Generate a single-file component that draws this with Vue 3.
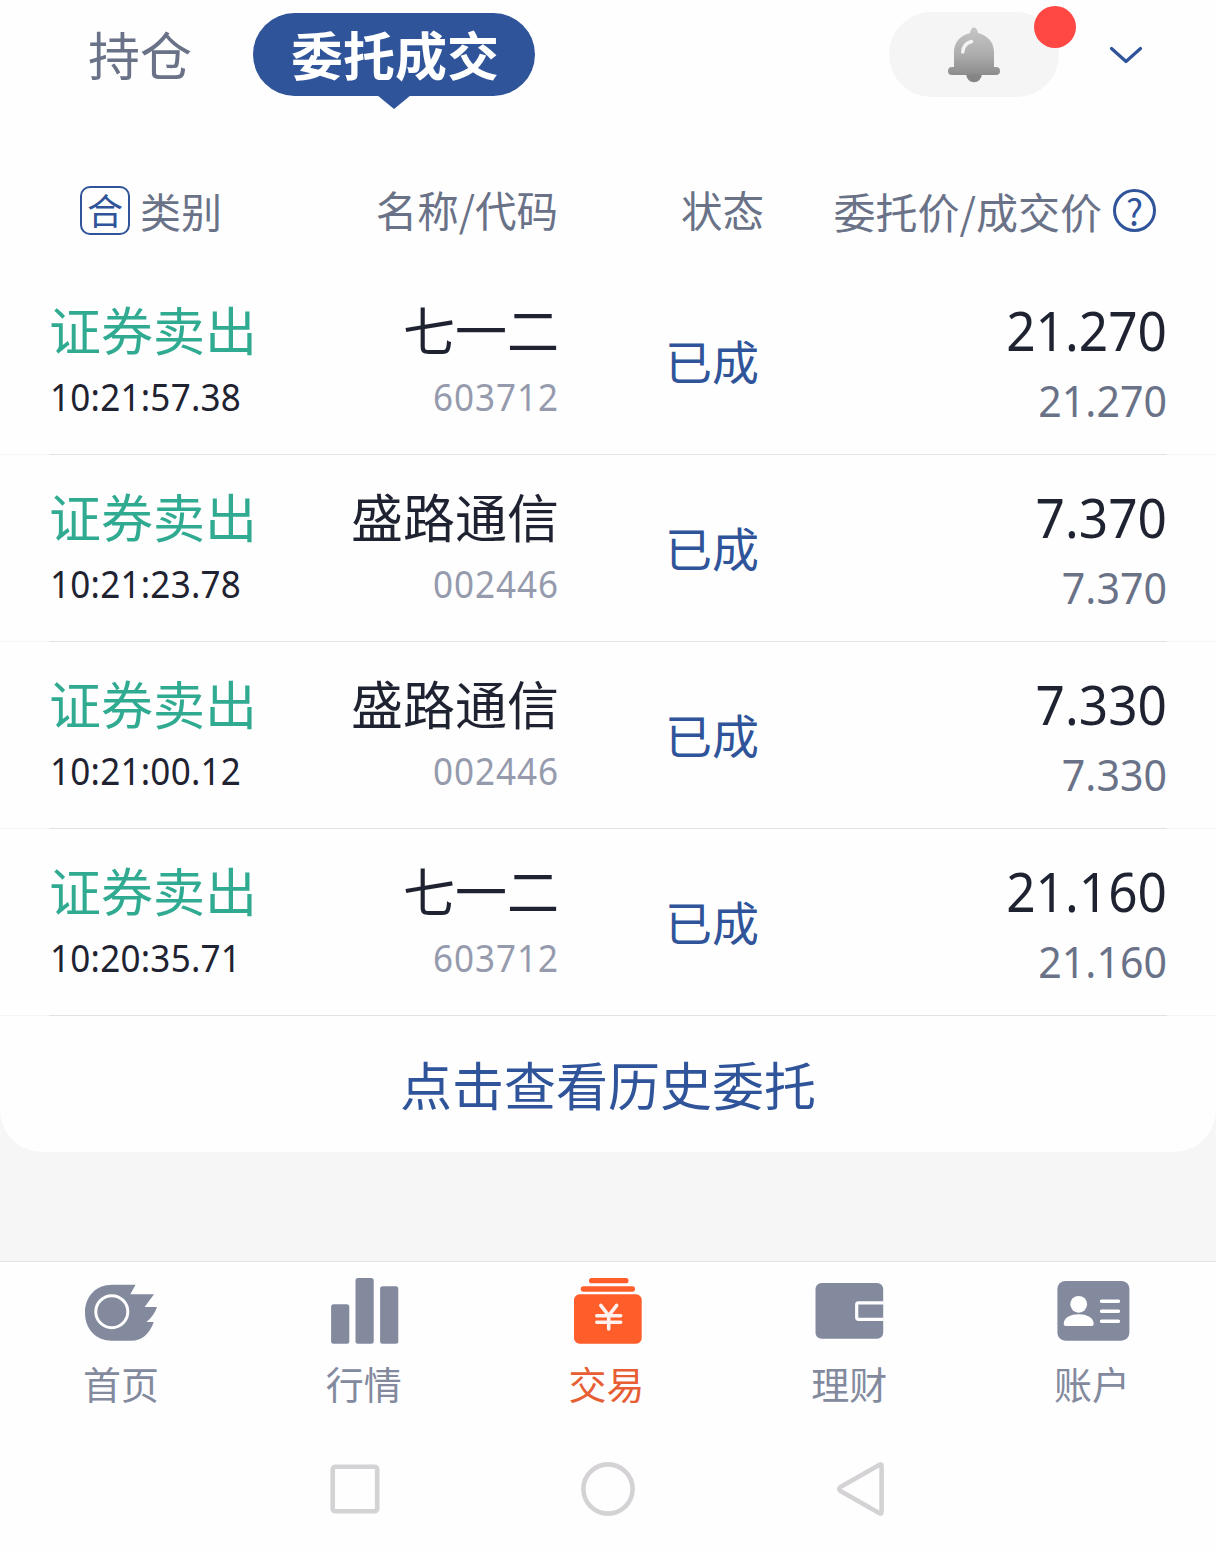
<script setup>
import { ref } from 'vue'

const activeTab = ref('orders')
const activeNav = ref('trade')

const orders = [
  { type: '证券卖出', time: '10:21:57.38', name: '七一二', code: '603712', status: '已成', price: '21.270', deal: '21.270' },
  { type: '证券卖出', time: '10:21:23.78', name: '盛路通信', code: '002446', status: '已成', price: '7.370', deal: '7.370' },
  { type: '证券卖出', time: '10:21:00.12', name: '盛路通信', code: '002446', status: '已成', price: '7.330', deal: '7.330' },
  { type: '证券卖出', time: '10:20:35.71', name: '七一二', code: '603712', status: '已成', price: '21.160', deal: '21.160' }
]

const navItems = [
  { id: 'home', label: '首页' },
  { id: 'market', label: '行情' },
  { id: 'trade', label: '交易' },
  { id: 'wealth', label: '理财' },
  { id: 'account', label: '账户' }
]
</script>

<template>
  <div class="page">
    <main class="card">
      <!-- Tabs -->
      <header class="tabs">
        <button class="tab" :class="{ active: activeTab === 'holdings' }" @click="activeTab = 'holdings'">持仓</button>
        <button class="tab" :class="{ active: activeTab === 'orders' }" @click="activeTab = 'orders'">委托成交</button>
        <div class="bell">
          <svg width="52" height="56" viewBox="0 0 52 56">
            <defs>
              <linearGradient id="bellFill" x1="0" y1="0" x2="0" y2="1">
                <stop offset="0" stop-color="#c6c6c6" />
                <stop offset=".55" stop-color="#aeaeae" />
                <stop offset="1" stop-color="#8c8c8c" />
              </linearGradient>
            </defs>
            <path d="M22 6C22.500 2.500 24 .5 26 .5S29.500 2.500 30 6C39 8 46 15 46 25V40H48A4 4 0 0 1 48 48H4A4 4 0 0 1 4 40H6V25C6 15 13 8 22 6Z" fill="url(#bellFill)" />
            <path d="M18.200 47.500H33.800A7.800 7.800 0 0 1 18.200 47.500Z" fill="#858585" />
            <path d="M14.800 25C15 20 18.500 16 23.500 14.500" fill="none" stroke="#f4f4f4" stroke-width="3.400" stroke-linecap="round" />
          </svg>
          <span class="dot"></span>
        </div>
        <svg class="chevron" width="36" height="20" viewBox="0 0 36 20">
          <path d="M3.500 3.500L18 16.500L32.500 3.500" fill="none" stroke="#2f549a" stroke-width="3.200" stroke-linecap="round" stroke-linejoin="round" />
        </svg>
      </header>

      <!-- Column titles -->
      <div class="grid head">
        <div class="kind"><span class="merge">合</span>类别</div>
        <div class="right">名称/代码</div>
        <div class="state">状态</div>
        <div class="prices">委托价/成交价<span class="help">?</span></div>
      </div>

      <!-- Orders -->
      <div v-for="(o, i) in orders" :key="i" class="grid row">
        <div>
          <div class="title sell">{{ o.type }}</div>
          <div class="num time">{{ o.time }}</div>
        </div>
        <div class="right">
          <div class="title">{{ o.name }}</div>
          <div class="num code">{{ o.code }}</div>
        </div>
        <div class="status">{{ o.status }}</div>
        <div class="right">
          <div class="num price">{{ o.price }}</div>
          <div class="num deal">{{ o.deal }}</div>
        </div>
      </div>

      <div class="history">点击查看历史委托</div>
    </main>

    <div class="spacer"></div>

    <nav class="nav">
      <div v-for="item in navItems" :key="item.id" class="nav-item" :class="{ on: activeNav === item.id }" @click="activeNav = item.id">
        <svg width="80" height="80" viewBox="0 0 80 80" fill="currentColor">
          <template v-if="item.id === 'home'">
            <path d="M31 12.700H54.600L49.300 22.300H73L63.600 35H76Q73 44 65.300 50H72.800Q66 68.700 50.300 68.700H31C15 68.700 4 57 4 40.700S15 12.700 31 12.700Z" />
            <circle cx="30.800" cy="39.700" r="16" fill="none" stroke="#fff" stroke-width="3" />
          </template>
          <template v-else-if="item.id === 'market'">
            <rect x="7.100" y="32.300" width="18.200" height="39.400" rx="2.500" />
            <rect x="31.500" y="6" width="18.200" height="65.700" rx="2.500" />
            <rect x="56.100" y="14.300" width="18.200" height="57.400" rx="2.500" />
          </template>
          <template v-else-if="item.id === 'trade'">
            <rect x="22" y="6" width="39.500" height="5.300" rx="2.600" />
            <rect x="13.700" y="14.300" width="54.300" height="5.400" rx="2.600" />
            <rect x="7" y="22.300" width="67.700" height="49.400" rx="5.500" />
            <path d="M33.800 33.300L41.700 43.500L49.700 33.300M41.700 43.500V57M29.800 43.700H53.700M29.800 50.300H53.700" fill="none" stroke="#fff" stroke-opacity=".92" stroke-width="3.600" stroke-linecap="round" />
          </template>
          <template v-else-if="item.id === 'wealth'">
            <rect x="5.500" y="11" width="67.700" height="55.700" rx="6" />
            <path d="M73.500 30.900H48.500Q46.700 30.900 46.700 32.700V45.600Q46.700 47.400 48.500 47.400H73.500" fill="none" stroke="#fff" stroke-width="3.200" />
          </template>
          <template v-else>
            <rect x="4.400" y="9" width="72" height="59.700" rx="8" />
            <circle cx="25.700" cy="32.300" r="8.400" fill="#fff" />
            <path d="M10.700 52C10.700 45.500 17.500 42.200 25.700 42.200S40.700 45.500 40.700 52Q40.700 54 38.500 54H13Q10.700 54 10.700 52Z" fill="#fff" />
            <path d="M48.500 29.200H65.500M48.500 39.200H65.500M48.500 49.200H65.500" stroke="#fff" stroke-width="3.400" stroke-linecap="round" />
          </template>
        </svg>
        <span>{{ item.label }}</span>
      </div>
    </nav>

    <!-- Android keys -->
    <footer class="keys">
      <svg width="54" height="54" viewBox="0 0 54 54"><rect x="4.700" y="4.800" width="44.500" height="44.500" rx="2.500" /></svg>
      <svg width="54" height="54" viewBox="0 0 54 54"><circle cx="27" cy="27" r="24.600" /></svg>
      <svg width="54" height="54" viewBox="0 0 54 54"><path d="M45.500 2.800Q47.600 1.500 47.600 4V50Q47.600 52.500 45.500 51.200L6.500 29Q4 27 6.500 25Z" /></svg>
    </footer>
  </div>
</template>

<style>
body{ margin:0; background:#fff; }
</style>

<style scoped>
.page{
  --blue:#2f549a; --grey:#6a7288; --dark:#1f2331;
  width:1216px; height:1554px; overflow:hidden; background:#f6f6f6;
  display:flex; flex-direction:column;
  font-family:"Noto Sans CJK SC","Noto Sans",sans-serif; color:var(--dark);
}
.card{ height:1152px; background:#fefefe; border-radius:0 0 42px 42px; overflow:hidden; }

.tabs{ display:flex; align-items:flex-start; height:143px; padding:12px 72px 0 50px; box-sizing:border-box; }
.tab{
  position:relative; margin-top:1px; height:83px; line-height:81px; padding:0 36px 2px 38px;
  border:none; border-radius:42px; background:none;
  font-family:inherit; font-size:52px; color:var(--grey); white-space:nowrap;
}
.tab + .tab{ margin-left:25px; }
.tab.active{ background:var(--blue); color:#fff; font-weight:700; }
.tab.active::after{
  content:""; position:absolute; left:50%; top:82px; width:34px; height:14px; margin-left:-17px;
  background:var(--blue); clip-path:polygon(0 0,100% 0,50% 100%);
}
.bell{
  position:relative; margin-left:auto; width:170px; height:85px; border-radius:43px;
  background:#f5f5f6; display:flex; align-items:center; justify-content:center;
}
.dot{ position:absolute; right:-17px; top:-6px; width:42px; height:42px; border-radius:50%; background:#ff4744; }
.chevron{ margin:33px 0 0 49px; }

.grid{ display:grid; grid-template-columns:254px 255px 250px 1fr; padding:0 49px; }
.right{ text-align:right; }

.head{ height:125px; line-height:133px; font-size:41.500px; color:var(--grey); white-space:nowrap; }
.kind{ display:flex; align-items:center; height:134px; padding-left:31px; font-size:41px; }
.merge{
  width:46px; height:45px; line-height:43px; margin-right:10px; text-align:center;
  border:2px solid var(--blue); border-radius:10px; color:var(--blue); font-size:36px;
}
.state{ padding-left:123px; }
.prices{ display:flex; align-items:center; justify-content:flex-end; height:134px; padding-right:11px; font-size:42px; }
.help{
  width:37px; height:37px; line-height:36px; margin-left:11px; text-align:center;
  border:3px solid var(--blue); border-radius:50%; color:var(--blue); font-size:36px;
}

.row{ position:relative; height:187px; box-sizing:border-box; padding-top:23px; border-bottom:1px solid #f6f6f6; }
.row::after{ content:""; position:absolute; left:49px; right:49px; bottom:-1px; height:1px; background:#e2e3e3; }
.title{ height:77px; line-height:75px; font-size:52px; }
.right .title{ margin-right:-1px; }
.sell{ color:#30ab91; }
/* slightly condensed digits */
.num{ font-family:"Noto Sans",sans-serif; transform:scaleX(.935); transform-origin:right; }
.time,.code{ height:58px; line-height:58px; font-size:37.500px; }
.time{ padding-left:1px; letter-spacing:.25px; transform-origin:left; }
.code{ color:#959bad; letter-spacing:1px; margin-right:-1px; }
.status{ height:138px; line-height:137px; padding-left:107px; font-size:47px; color:var(--blue); }
.price{ height:78px; line-height:78px; font-size:55px; }
.deal{ height:62px; line-height:63px; font-size:44px; color:var(--grey); }

.history{ height:136px; line-height:135px; text-align:center; font-size:52px; color:var(--blue); }

.spacer{ height:109px; }
.nav{
  display:flex; height:169px; box-sizing:border-box; padding:10px 2px 0 0;
  background:#fefefe; border-top:1px solid #e2e3ea;
}
.nav-item{ flex:1; display:flex; flex-direction:column; align-items:center; color:#838a9e; }
.nav-item span{ height:64px; margin-right:1px; line-height:61px; font-size:38px; }
.nav-item.on{ color:#ff5e2a; }
.nav-item.on span{ color:#e75e34; }

.keys{ flex:1; display:flex; justify-content:center; gap:199px; padding-top:32px; background:#fefefe; }
.keys svg{ fill:none; stroke:#d4d2d5; stroke-width:4.600; stroke-linejoin:round; }
</style>
